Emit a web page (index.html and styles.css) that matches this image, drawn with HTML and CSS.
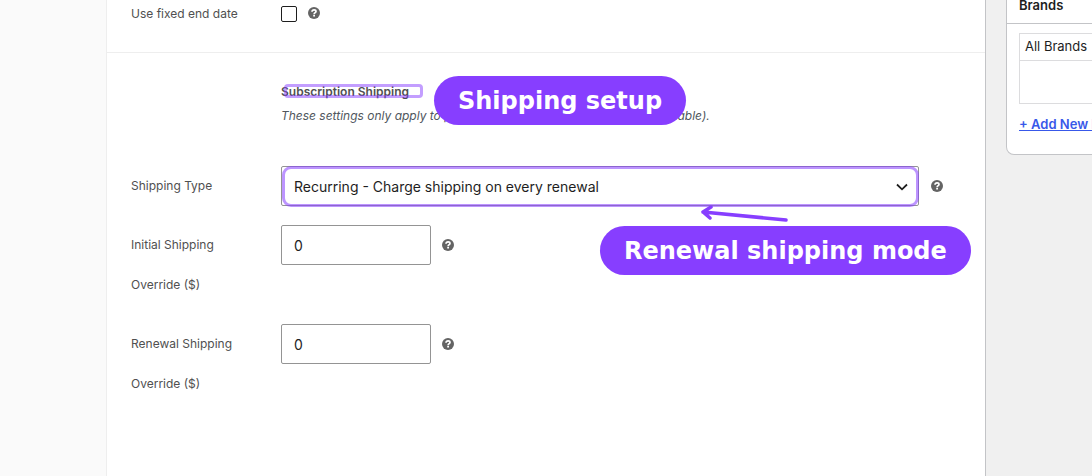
FILE: index.html
```
<!DOCTYPE html>
<html lang="en">
<head>
    <meta charset="UTF-8">
    <meta name="viewport" content="width=device-width, initial-scale=1.0">
    <title>Subscription Shipping</title>
    <link rel="stylesheet" href="styles.css">
</head>
<body>
    <!-- question mark icon, shared by all help tips -->
    <svg class="sprite" width="0" height="0" aria-hidden="true">
        <symbol id="help" viewBox="0 0 12 12">
            <circle cx="6" cy="6" r="6" fill="#646464"/>
            <path d="M4 4.7C4.1 3.4 4.9 2.8 6.1 2.8c1.2 0 1.9.6 1.9 1.6C8 5.7 6.2 5.6 6.1 7.2" fill="none" stroke="#fff" stroke-width="1.7"/>
            <rect x="5.2" y="7.9" width="1.8" height="1.6" fill="#fff"/>
        </symbol>
    </svg>
    <div class="page">
        <main class="product-data">
            <div class="tabs"></div>
            <form class="panel" onsubmit="return false;">
                <div class="group dates">
                    <div class="field">
                        <label for="fixedEnd">Use fixed end date</label>
                        <input type="checkbox" id="fixedEnd">
                        <svg class="help"><use href="#help"/></svg>
                    </div>
                </div>
                <div class="group shipping">
                    <div class="intro">
                        <h4><span class="marked">Subscription Shipping</span></h4>
                        <p>These settings only apply to physical products (not virtual / downloadable).</p>
                        <div class="callout callout-setup">Shipping setup</div>
                    </div>
                    <div class="field">
                        <label for="shippingType">Shipping Type</label>
                        <div class="select-wrap">
                            <select id="shippingType">
                                <option>Recurring - Charge shipping on every renewal</option>
                            </select>
                            <svg class="chevron" viewBox="0 0 12 8"><path d="M1 1.5l5 4.8 5-4.8" fill="none" stroke="#1e1e1e" stroke-width="1.8"/></svg>
                            <svg class="arrow" viewBox="0 0 90 18"><path d="M86 15L3 7M11 2L3 7l7 6" fill="none" stroke="#873eff" stroke-width="3.5" stroke-linecap="round" stroke-linejoin="round"/></svg>
                            <div class="callout callout-mode">Renewal shipping mode</div>
                        </div>
                        <svg class="help"><use href="#help"/></svg>
                    </div>
                    <div class="field">
                        <label for="initialShipping">Initial Shipping Override ($)</label>
                        <input type="text" id="initialShipping" value="0">
                        <svg class="help"><use href="#help"/></svg>
                    </div>
                    <div class="field">
                        <label for="renewalShipping">Renewal Shipping Override ($)</label>
                        <input type="text" id="renewalShipping" value="0">
                        <svg class="help"><use href="#help"/></svg>
                    </div>
                </div>
            </form>
        </main>
        <aside class="side">
            <section class="postbox">
                <h2>Brands</h2>
                <div class="inside">
                    <div class="brand-tab">All Brands</div>
                    <div class="brand-list"></div>
                    <a href="#">+ Add New Brand</a>
                </div>
            </section>
        </aside>
    </div>
</body>
</html>
```
FILE: styles.css
```
* {
    box-sizing: border-box;
}
body {
    margin: 0;
    background: #f0f0f0;
    font-family: Inter, 'Liberation Sans', sans-serif;
    font-size: 12px;
    color: #505050;
}
h2, h4, p {
    margin: 0;
}
.sprite {
    position: absolute;
}
.page {
    display: flex;
    gap: 20px;
    min-height: 100vh;
    overflow: hidden;
}
.product-data {
    display: flex;
    flex: 1;
    background: #fff;
    border-right: 1px solid #c3c4c7;
}
.tabs {
    width: 107px;
    background: #fafafa;
    border-right: 1px solid #eee;
}
.panel {
    flex: 1;
}
.group {
    padding: 0 42px 0 24px;
}
.dates {
    padding-bottom: 18px;
    border-bottom: 1px solid #eee;
}
.field {
    display: flex;
    align-items: flex-start;
    margin-bottom: 19px;
}
.field label {
    width: 110px;
    margin-right: 40px;
    line-height: 40px;
}
.dates .field {
    align-items: center;
    height: 28px;
    margin-bottom: 6px;
}
.help {
    flex: none;
    width: 12px;
    height: 12px;
    margin: 14px 0 0 11px;
}
.select-wrap + .help {
    margin-left: 12px;
}
.dates .help {
    margin-top: 0;
    margin-bottom: 2px;
}
input[type="checkbox"] {
    appearance: none;
    width: 16px;
    height: 16px;
    margin: 0;
    border: 1px solid #1e1e1e;
    border-radius: 2px;
    background: #fff;
}
input[type="text"], select {
    height: 40px;
    margin: 0;
    padding: 0 12px;
    border: 1px solid #949494;
    border-radius: 2px;
    background: #fff;
    color: #1e1e1e;
    font-family: inherit;
    font-size: 14px;
}
input[type="text"] {
    width: 150px;
}
select {
    appearance: none;
    width: 100%;
    display: block;
}
.select-wrap {
    position: relative;
    flex: 1;
}
/* highlight ring around the select */
.select-wrap::after {
    content: '';
    position: absolute;
    inset: 0 0 -1px 1px;
    border: 3px solid rgba(135, 62, 255, 0.55);
    border-radius: 9px;
    pointer-events: none;
}
.chevron {
    position: absolute;
    top: 17px;
    right: 11px;
    width: 12px;
    height: 8px;
}
.intro {
    position: relative;
    margin-left: 150px;
    padding: 27px 0 38px;
}
.intro h4 {
    font-size: 12px;
    font-weight: 600;
    line-height: 24px;
}
.intro p {
    color: #50575e;
    font-style: italic;
    line-height: 24px;
    white-space: nowrap;
}
.marked {
    position: relative;
}
.marked::after {
    content: '';
    position: absolute;
    inset: 0 -14px 1px 3px;
    border: 3px solid rgba(135, 62, 255, 0.5);
    border-radius: 4px;
}
.callout {
    position: absolute;
    padding: 1px 24px 0;
    border-radius: 25px;
    background: #873eff;
    color: #fff;
    font-family: 'DejaVu Sans', sans-serif;
    font-size: 24px;
    font-weight: 700;
    line-height: 48px;
    white-space: nowrap;
}
.callout-setup {
    top: 23px;
    left: 153px;
}
.callout-mode {
    top: 60px;
    left: 50%;
}
.arrow {
    position: absolute;
    top: 39px;
    left: 419px;
    width: 90px;
    height: 18px;
}
.side {
    width: 86px;
}
.postbox {
    width: 280px;
    background: #fff;
    border: 1px solid #c3c4c7;
    border-top: 0;
    border-radius: 0 0 8px 8px;
    color: #1e1e1e;
}
.postbox h2 {
    padding: 0 12px 12px;
    border-bottom: 1px solid #c3c4c7;
    font-size: 13px;
    font-weight: 600;
    line-height: 11px;
}
.inside {
    padding: 9px 12px 20px;
    font-size: 13px;
}
.brand-tab {
    display: inline-block;
    padding: 0 5px 2px;
    border: 1px solid #dcdcde;
    border-bottom: 0;
    line-height: 24px;
    vertical-align: top;
}
.brand-list {
    height: 44px;
    margin-bottom: 10px;
    border: 1px solid #dcdcde;
}
.inside a {
    color: #3858e9;
    font-weight: 600;
    line-height: 20px;
}
```
